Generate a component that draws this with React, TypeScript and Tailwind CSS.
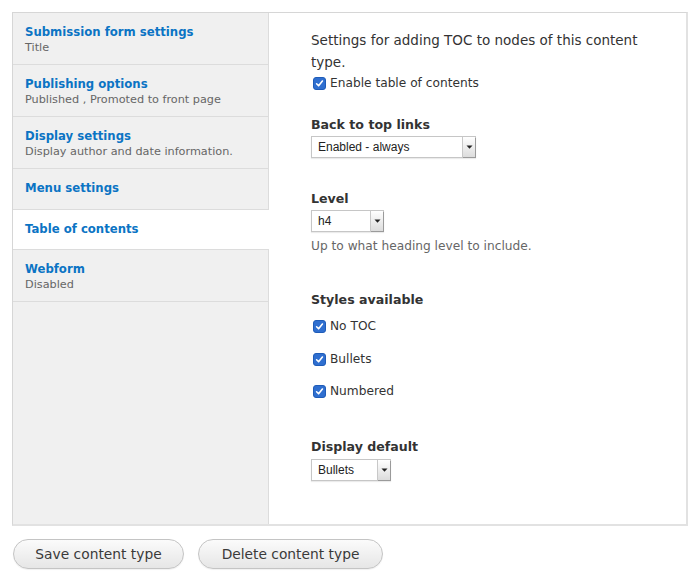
import React from "react";

const FONT = { fontFamily: '"DejaVu Sans", "Lucida Grande", Verdana, sans-serif' };

function Check() {
  return (
    <svg width="13" height="13" viewBox="0 0 13 13" className="shrink-0">
      <rect x="0.5" y="0.5" width="12" height="12" rx="2.5" fill="#2f6fd0" stroke="#1f5cb8" />
      <path d="M3.6 6.8 L5.6 8.8 L9.4 4.0" fill="none" stroke="#fff" strokeWidth="1.6" strokeLinecap="round" strokeLinejoin="round" />
    </svg>
  );
}

function CheckRow({ label, className = "" }: { label: string; className?: string }) {
  return (
    <div className={"flex items-center gap-[4px] h-[18px] pl-[2px] text-[12.2px] text-[#333] " + className}>
      <Check />
      <span>{label}</span>
    </div>
  );
}

function Select({ value, width, className = "" }: { value: string; width: string; className?: string }) {
  return (
    <div className={"flex h-[22px] border border-[#c6c6c6] bg-white shadow-[0_1px_1px_rgba(0,0,0,0.08)] " + width + " " + className}>
      <div className="flex-1 flex items-center pl-[6px] text-[12px] text-[#222]" style={{ fontFamily: '"Liberation Sans", Arial, sans-serif' }}>
        {value}
      </div>
      <div className="w-[13px] flex items-center justify-center border-l border-[#c8c8c8] bg-gradient-to-b from-[#ffffff] to-[#dcdcdc] shadow-[1px_1px_0_#9a9a9a]">
        <svg width="7" height="4" viewBox="0 0 7 4">
          <path d="M0.5 0.5 L6.5 0.5 L3.5 3.8 Z" fill="#222" />
        </svg>
      </div>
    </div>
  );
}

function NavItem({ title, sub, active = false }: { title: string; sub?: string; active?: boolean }) {
  return (
    <div
      className={
        "pl-[12px] pt-[11px] border-b border-[#dcdcdc] " +
        (active ? "bg-white pb-[12px]" : "bg-[#f0f0f0] border-r border-r-[#dcdcdc] " + (sub ? "pb-[8px]" : "pb-[13px]"))
      }
    >
      <div className="text-[11.7px] leading-[16px] font-bold text-[#0b74c4]">{title}</div>
      {sub && <div className="text-[11.25px] leading-[16px] text-[#666]">{sub}</div>}
    </div>
  );
}

export default function App() {
  return (
    <div className="w-[700px] h-[586px] bg-white" style={FONT}>
      <div className="pl-[12px] pt-[12px]">
        <div className="w-[676px] h-[514px] flex border-t border-l border-[#d6d6d6] border-r-2 border-b-2 border-r-[#e2e2e2] border-b-[#e2e2e2]">
          <div className="w-[256px] flex flex-col">
            <NavItem title="Submission form settings" sub="Title" />
            <NavItem title="Publishing options" sub="Published , Promoted to front page" />
            <NavItem title="Display settings" sub="Display author and date information." />
            <NavItem title="Menu settings" />
            <NavItem title="Table of contents" active />
            <NavItem title="Webform" sub="Disabled" />
            <div className="flex-1 bg-[#f0f0f0] border-r border-[#dcdcdc]" />
          </div>
          <div className="flex-1 pl-[42px] pt-[16px] text-[#333]">
            <p className="text-[13.5px] leading-[22px] w-[340px] mb-[1px]">
              Settings for adding TOC to nodes of this content type.
            </p>
            <CheckRow label="Enable table of contents" />
            <div className="mt-[24px] text-[12.6px] leading-[18px] font-bold">Back to top links</div>
            <Select value="Enabled - always" width="w-[165px]" className="mt-[2px]" />
            <div className="mt-[32px] text-[12.6px] leading-[18px] font-bold">Level</div>
            <Select value="h4" width="w-[73px]" className="mt-[2px]" />
            <div className="mt-[5px] text-[12.2px] leading-[18px] text-[#666]">Up to what heading level to include.</div>
            <div className="mt-[36px] text-[12.6px] leading-[18px] font-bold">Styles available</div>
            <CheckRow label="No TOC" className="mt-[8px]" />
            <CheckRow label="Bullets" className="mt-[15px]" />
            <CheckRow label="Numbered" className="mt-[14px]" />
            <div className="mt-[38px] text-[12.6px] leading-[18px] font-bold">Display default</div>
            <Select value="Bullets" width="w-[80px]" className="mt-[3px]" />
          </div>
        </div>
        <div className="flex gap-[14px] mt-[13px] pl-[1px]">
          <button className="h-[30px] w-[171px] rounded-full border border-[#c4c4c4] bg-gradient-to-b from-[#fbfbfb] to-[#e6e6e6] text-[13.8px] text-[#3a3a3a] shadow-[0_1px_1px_rgba(0,0,0,0.06)]">
            Save content type
          </button>
          <button className="h-[30px] w-[185px] rounded-full border border-[#c4c4c4] bg-gradient-to-b from-[#fbfbfb] to-[#e6e6e6] text-[13.8px] text-[#3a3a3a] shadow-[0_1px_1px_rgba(0,0,0,0.06)]">
            Delete content type
          </button>
        </div>
      </div>
    </div>
  );
}
